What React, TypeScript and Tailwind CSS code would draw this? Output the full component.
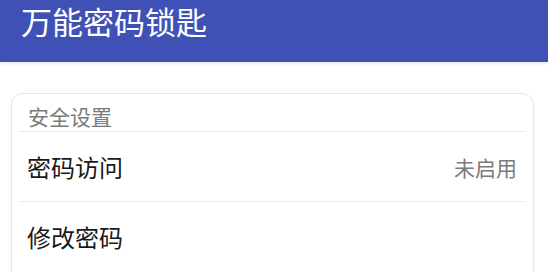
const font = { fontFamily: '"Noto Sans CJK SC", "Noto Sans", sans-serif' }

function Row({ label, value, last }: { label: string; value?: string; last?: boolean }) {
  return (
    <>
      <div className="flex h-[69px] items-center justify-between pl-[15px] pr-[16px]">
        <span className="text-[24px] leading-[30px] text-[#1a1a1a]">{label}</span>
        {value && <span className="text-[21px] leading-[28px] text-[#7a7a7a]">{value}</span>}
      </div>
      {!last && <div className="mx-[7px] h-px bg-[#ececec]" />}
    </>
  )
}

export default function App() {
  return (
    <div className="h-[272px] w-[548px] overflow-hidden bg-white" style={font}>
      {/* App bar */}
      <div className="relative h-[62px] bg-[#3f51b5] px-[21px] pt-px shadow-[0_2px_4px_rgba(0,0,0,0.08)]">
        <h1 className="text-[31px] leading-[40px] text-white">万能密码锁匙</h1>
      </div>

      {/* Settings card */}
      <div className="ml-[11px] mr-[14px] mt-[31px] h-[220px] rounded-[12px] border border-[#e6e6e6] bg-white shadow-[0_1px_3px_rgba(0,0,0,0.06)]">
        <div className="h-[37px] pl-[16px] pt-[8px] text-[21px] leading-[29px] text-[#7a7a7a]">安全设置</div>
        <div className="mx-[7px] h-px bg-[#ececec]" />
        <Row label="密码访问" value="未启用" />
        <Row label="修改密码" last />
      </div>
    </div>
  )
}
